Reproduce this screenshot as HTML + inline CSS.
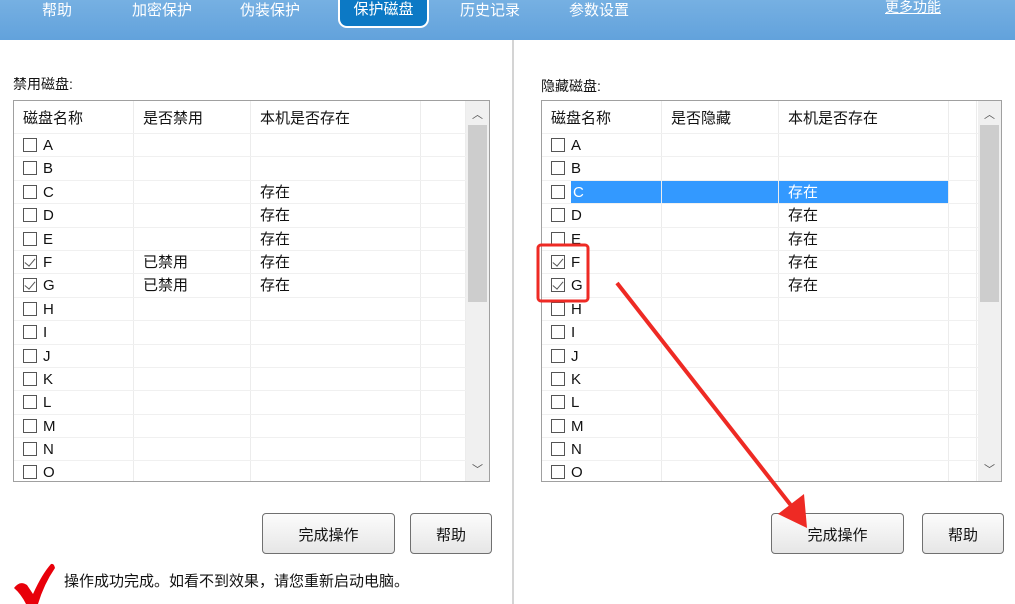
<!DOCTYPE html>
<html><head><meta charset="utf-8"><style>
*{margin:0;padding:0;box-sizing:border-box}
body{width:1015px;height:604px;overflow:hidden;background:#fff;font-family:"Liberation Sans","Noto Sans CJK SC",sans-serif;font-size:15px;color:#111;position:relative}
.top{position:absolute;left:0;top:0;width:1015px;height:40px;background:linear-gradient(#76b0e2,#62a2dc)}
.tab{position:absolute;top:0;color:#fff;font-size:15px;line-height:22px}
.act{position:absolute;left:338px;top:-4px;width:91px;height:32px;background:#0c79c5;border:2px solid #fff;border-top:none;border-radius:0 0 9px 9px;color:#fff;text-align:center;line-height:28px;font-size:15px}
.more{position:absolute;left:885px;top:-3px;color:#fff;text-decoration:underline;font-size:14px}
.div{position:absolute;left:512px;top:40px;width:2px;height:564px;background:#d4d4d4}
.lbl{position:absolute;font-size:14px}
.tb{position:absolute;top:100px;height:382px;border:1px solid #a0a0a0;overflow:hidden;background:#fff}
.hd,.r{display:flex;height:23.4px;border-bottom:1px solid #f0f0f0;white-space:nowrap}
.hd{height:33px;line-height:36px}
.c{border-right:1px solid #ececec;padding-left:9px;line-height:23px;overflow:hidden}
.hd .c{line-height:36px}
.cb{display:inline-block;width:14px;height:14px;border:1px solid #555;vertical-align:-2px;margin-right:6px;position:relative;background:#fff}
.ck::after{content:"";position:absolute;left:3px;top:0px;width:5px;height:9px;border:solid #555;border-width:0 1.5px 1.5px 0;transform:rotate(40deg)}
.sb{position:absolute;top:0;right:0;width:23px;height:100%;background:#f0f0f0}
.th{position:absolute;left:2px;top:24px;width:19px;height:177px;background:#cdcdcd}
.ar{position:absolute;left:6px;font-size:11px;color:#555}
.btn{position:absolute;top:513px;height:41px;border:1px solid #707070;border-radius:4px;background:linear-gradient(#fcfcfc,#e6e6e6);text-align:center;line-height:44px;font-size:15px}
.sel{background:#3399ff;color:#fff}
</style></head><body>
<div class="top"></div>
<div class="tab" style="left:42px">帮助</div>
<div class="tab" style="left:132px">加密保护</div>
<div class="tab" style="left:240px">伪装保护</div>
<div class="act">保护磁盘</div>
<div class="tab" style="left:460px">历史记录</div>
<div class="tab" style="left:569px">参数设置</div>
<div class="more">更多功能</div>
<div class="div"></div>

<div class="lbl" style="left:13px;top:74px">禁用磁盘:</div>
<div class="tb" style="left:13px;width:477px">
<div class="hd"><div class="c" style="width:120px">磁盘名称</div><div class="c" style="width:117px">是否禁用</div><div class="c" style="width:170px">本机是否存在</div><div class="c" style="width:45px"></div></div>
<div class="r"><div class="c" style="width:120px"><span class="cb"></span>A</div><div class="c" style="width:117px"></div><div class="c" style="width:170px"></div><div class="c" style="width:45px"></div></div>
<div class="r"><div class="c" style="width:120px"><span class="cb"></span>B</div><div class="c" style="width:117px"></div><div class="c" style="width:170px"></div><div class="c" style="width:45px"></div></div>
<div class="r"><div class="c" style="width:120px"><span class="cb"></span>C</div><div class="c" style="width:117px"></div><div class="c" style="width:170px">存在</div><div class="c" style="width:45px"></div></div>
<div class="r"><div class="c" style="width:120px"><span class="cb"></span>D</div><div class="c" style="width:117px"></div><div class="c" style="width:170px">存在</div><div class="c" style="width:45px"></div></div>
<div class="r"><div class="c" style="width:120px"><span class="cb"></span>E</div><div class="c" style="width:117px"></div><div class="c" style="width:170px">存在</div><div class="c" style="width:45px"></div></div>
<div class="r"><div class="c" style="width:120px"><span class="cb ck"></span>F</div><div class="c" style="width:117px">已禁用</div><div class="c" style="width:170px">存在</div><div class="c" style="width:45px"></div></div>
<div class="r"><div class="c" style="width:120px"><span class="cb ck"></span>G</div><div class="c" style="width:117px">已禁用</div><div class="c" style="width:170px">存在</div><div class="c" style="width:45px"></div></div>
<div class="r"><div class="c" style="width:120px"><span class="cb"></span>H</div><div class="c" style="width:117px"></div><div class="c" style="width:170px"></div><div class="c" style="width:45px"></div></div>
<div class="r"><div class="c" style="width:120px"><span class="cb"></span>I</div><div class="c" style="width:117px"></div><div class="c" style="width:170px"></div><div class="c" style="width:45px"></div></div>
<div class="r"><div class="c" style="width:120px"><span class="cb"></span>J</div><div class="c" style="width:117px"></div><div class="c" style="width:170px"></div><div class="c" style="width:45px"></div></div>
<div class="r"><div class="c" style="width:120px"><span class="cb"></span>K</div><div class="c" style="width:117px"></div><div class="c" style="width:170px"></div><div class="c" style="width:45px"></div></div>
<div class="r"><div class="c" style="width:120px"><span class="cb"></span>L</div><div class="c" style="width:117px"></div><div class="c" style="width:170px"></div><div class="c" style="width:45px"></div></div>
<div class="r"><div class="c" style="width:120px"><span class="cb"></span>M</div><div class="c" style="width:117px"></div><div class="c" style="width:170px"></div><div class="c" style="width:45px"></div></div>
<div class="r"><div class="c" style="width:120px"><span class="cb"></span>N</div><div class="c" style="width:117px"></div><div class="c" style="width:170px"></div><div class="c" style="width:45px"></div></div>
<div class="r"><div class="c" style="width:120px"><span class="cb"></span>O</div><div class="c" style="width:117px"></div><div class="c" style="width:170px"></div><div class="c" style="width:45px"></div></div>
<div class="sb"><div class="ar" style="top:5px">︿</div><div class="th"></div><div class="ar" style="bottom:4px">﹀</div></div>
</div>

<div class="lbl" style="left:541px;top:76px">隐藏磁盘:</div>
<div class="tb" style="left:541px;width:461px">
<div class="hd"><div class="c" style="width:120px">磁盘名称</div><div class="c" style="width:117px">是否隐藏</div><div class="c" style="width:170px">本机是否存在</div><div class="c" style="width:28px"></div></div>
<div class="r"><div class="c" style="width:120px"><span class="cb"></span>A</div><div class="c" style="width:117px"></div><div class="c" style="width:170px"></div><div class="c" style="width:28px"></div></div>
<div class="r"><div class="c" style="width:120px"><span class="cb"></span>B</div><div class="c" style="width:117px"></div><div class="c" style="width:170px"></div><div class="c" style="width:28px"></div></div>
<div class="r"><div class="c" style="width:120px;padding-left:0"><span style="padding-left:9px;display:inline-block"><span class="cb"></span></span><span class="sel" style="display:inline-block;width:91px;padding-left:2px">C</span></div><div class="c sel" style="width:117px"></div><div class="c sel" style="width:170px">存在</div><div class="c" style="width:28px"></div></div>
<div class="r"><div class="c" style="width:120px"><span class="cb"></span>D</div><div class="c" style="width:117px"></div><div class="c" style="width:170px">存在</div><div class="c" style="width:28px"></div></div>
<div class="r"><div class="c" style="width:120px"><span class="cb"></span>E</div><div class="c" style="width:117px"></div><div class="c" style="width:170px">存在</div><div class="c" style="width:28px"></div></div>
<div class="r"><div class="c" style="width:120px"><span class="cb ck"></span>F</div><div class="c" style="width:117px"></div><div class="c" style="width:170px">存在</div><div class="c" style="width:28px"></div></div>
<div class="r"><div class="c" style="width:120px"><span class="cb ck"></span>G</div><div class="c" style="width:117px"></div><div class="c" style="width:170px">存在</div><div class="c" style="width:28px"></div></div>
<div class="r"><div class="c" style="width:120px"><span class="cb"></span>H</div><div class="c" style="width:117px"></div><div class="c" style="width:170px"></div><div class="c" style="width:28px"></div></div>
<div class="r"><div class="c" style="width:120px"><span class="cb"></span>I</div><div class="c" style="width:117px"></div><div class="c" style="width:170px"></div><div class="c" style="width:28px"></div></div>
<div class="r"><div class="c" style="width:120px"><span class="cb"></span>J</div><div class="c" style="width:117px"></div><div class="c" style="width:170px"></div><div class="c" style="width:28px"></div></div>
<div class="r"><div class="c" style="width:120px"><span class="cb"></span>K</div><div class="c" style="width:117px"></div><div class="c" style="width:170px"></div><div class="c" style="width:28px"></div></div>
<div class="r"><div class="c" style="width:120px"><span class="cb"></span>L</div><div class="c" style="width:117px"></div><div class="c" style="width:170px"></div><div class="c" style="width:28px"></div></div>
<div class="r"><div class="c" style="width:120px"><span class="cb"></span>M</div><div class="c" style="width:117px"></div><div class="c" style="width:170px"></div><div class="c" style="width:28px"></div></div>
<div class="r"><div class="c" style="width:120px"><span class="cb"></span>N</div><div class="c" style="width:117px"></div><div class="c" style="width:170px"></div><div class="c" style="width:28px"></div></div>
<div class="r"><div class="c" style="width:120px"><span class="cb"></span>O</div><div class="c" style="width:117px"></div><div class="c" style="width:170px"></div><div class="c" style="width:28px"></div></div>
<div class="sb"><div class="ar" style="top:5px">︿</div><div class="th"></div><div class="ar" style="bottom:4px">﹀</div></div>
</div>

<div class="btn" style="left:262px;width:133px">完成操作</div>
<div class="btn" style="left:410px;width:82px">帮助</div>
<div class="btn" style="left:771px;width:133px">完成操作</div>
<div class="btn" style="left:922px;width:82px">帮助</div>

<div style="position:absolute;left:64px;top:570px;font-size:15px">操作成功完成。如看不到效果，请您重新启动电脑。</div>

<svg style="position:absolute;left:0;top:0" width="1015" height="604">
<path d="M14 588 Q20 580 27 585 L33 594 Q42 574 51 564 Q54 563 55 568 Q44 584 38 604 L26 604 Q21 594 14 588Z" fill="#e8000a"/>
<rect x="538" y="245" width="50" height="56" rx="3" fill="none" stroke="#ee2a24" stroke-width="3"/>
<line x1="617" y1="283" x2="793" y2="508" stroke="#ee2a24" stroke-width="4"/>
<path d="M807 528 L778 514 L804 494Z" fill="#ee2a24"/>
</svg>
</body></html>
